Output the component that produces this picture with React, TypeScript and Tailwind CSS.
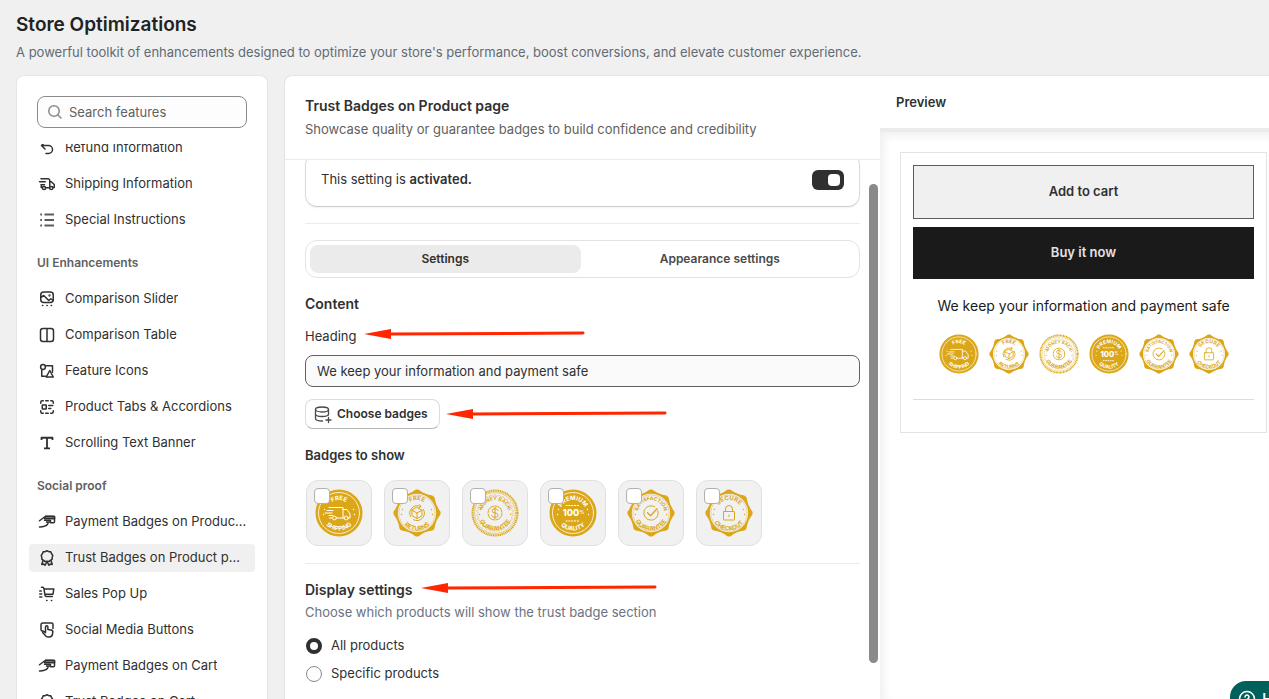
import { useState } from "react";
import type { ReactNode } from "react";

const GOLD = "#dba617";

const ICONS: Record<string, ReactNode> = {
  refund: <path d="M8 4 4.5 7.5 8 11M5 7.5h6.5a4 4 0 0 1 0 8H9" />,
  truck: (
    <>
      <path d="M4 4.75h7a1.75 1.75 0 0 1 1.75 1.75v5.75M12.75 7.75h1.5l3 2.75v3h-1.1M2.5 7.75h5.75M4 10.75h3.5M4.25 10.75v2.75h1M9 13.75h3" />
      <circle cx="7" cy="14" r="1.6" />
      <circle cx="14.25" cy="14" r="1.6" />
    </>
  ),
  list: (
    <g stroke="#5c5c5c" strokeWidth="1.8" strokeLinecap="butt">
      <path d="M7.5 4.5h9.500M7.5 10h9.500M7.5 15.500h9.500" />
      <path d="M3.25 4.500h1.750M3.25 10h1.750M3.25 15.500h1.750" />
    </g>
  ),
  slider: (
    <>
      <rect x="3.75" y="3" width="12.5" height="10.5" rx="3" />
      <path d="M4 8.25 6.75 6.5l5 5 2-1.75 2.25 1.5" />
      <circle cx="12.5" cy="6.5" r="0.4" />
      <path d="M5.5 16.5h.3M9.9 16.5h.3M14.2 16.5h.3" />
    </>
  ),
  columns: <path d="M6 3.5h8a2.5 2.5 0 0 1 2.5 2.5v8a2.5 2.5 0 0 1-2.5 2.5H6A2.5 2.5 0 0 1 3.5 14V6A2.5 2.5 0 0 1 6 3.5ZM10 3.5v13" />,
  shapes: (
    <>
      <circle cx="6" cy="6" r="2.4" />
      <path d="M9.5 4.75h6v6.5M4.75 9v6.25h4M12.75 9.5l3.5 6.5h-7Z" />
    </>
  ),
  tabs: (
    <>
      <path d="M3.75 6.25v-1a1.5 1.5 0 0 1 1.5-1.5h1M8.75 3.75h2.5M13.75 3.75h1a1.5 1.5 0 0 1 1.5 1.5v1M3.75 13.75v1a1.5 1.5 0 0 0 1.5 1.5h1M8.75 16.25h2.5M13.75 16.25h1a1.5 1.5 0 0 0 1.5-1.5v-1" />
      <rect x="5.25" y="8" width="4" height="4" rx="0.5" />
      <path d="M11.75 8.5h4M11.75 11.5h2" />
    </>
  ),
  text: <path strokeWidth="1.8" strokeLinecap="butt" d="M4.5 7V4.75h11V7M10 4.75v10.5M7 15.4h6" />,
  payment: (
    <>
      <path d="M8.5 4.25h8a1 1 0 0 1 1 1v4.5a1 1 0 0 1-1 1h-3" />
      <path fill="#8a8a8a" d="M8.5 4.5h9v2.25h-10Z" />
      <path d="M2.5 8.75 7.5 5M7.5 8.25h5.25c1.25 0 1 1.75 0 1.75H9.5c1.5 0 2 1.5 1 2.25C9 14.5 6.75 14.75 2.5 15" />
    </>
  ),
  rosette: (
    <>
      <path d="m10 2.75 1.8.9 2 .2.8 1.9 1.2 1.6-.6 2-.1 2-1.8 1-1.5 1.3-1.8-.5-1.8.5-1.5-1.3-1.8-1-.1-2-.6-2 1.2-1.6.8-1.9 2-.2Z" />
      <path d="m6 12.5-1.25 4 2-.4 1.25 1.2L9.75 14M14 12.5l1.25 4-2-.4-1.25 1.2L10.25 14" />
    </>
  ),
  cart: (
    <>
      <path d="M4.5 3.25h1.2c.7 0 1.1.5 1.2 1.1l1.1 7c.1.7.6 1.1 1.3 1.1h6M7.2 5h9.6l-.8 5.2H8" />
      <path d="M2.75 7h1.5M2.75 10h2M2.75 13h2M9.7 16.4h.3M14.4 16.4h.3" />
    </>
  ),
  touch: (
    <>
      <path d="M6 11h-.5A1.500 1.500 0 0 1 4 9.500V4.500A1.500 1.500 0 0 1 5.500 3h9A1.500 1.500 0 0 1 16 4.500v4" />
      <path d="M8.500 12V7a1.200 1.200 0 0 1 2.400 0v2.500l3.200.5c1.200.2 1.800 1 1.700 2.200l-.3 2c-.2 1.700-1.300 2.800-3 2.800h-1.500c-1.200 0-2-.5-2.600-1.400L5.750 12.700c-.5-1 .7-1.700 1.500-1l1.250 1" />
    </>
  ),
};

const GROUPS = [
  {
    title: "",
    items: [
      { icon: "refund", label: "Refund Information" },
      { icon: "truck", label: "Shipping Information" },
      { icon: "list", label: "Special Instructions" },
    ],
  },
  {
    title: "UI Enhancements",
    items: [
      { icon: "slider", label: "Comparison Slider" },
      { icon: "columns", label: "Comparison Table" },
      { icon: "shapes", label: "Feature Icons" },
      { icon: "tabs", label: "Product Tabs & Accordions" },
      { icon: "text", label: "Scrolling Text Banner" },
    ],
  },
  {
    title: "Social proof",
    items: [
      { icon: "payment", label: "Payment Badges on Product page" },
      { icon: "rosette", label: "Trust Badges on Product page", active: true },
      { icon: "cart", label: "Sales Pop Up" },
      { icon: "touch", label: "Social Media Buttons" },
      { icon: "payment", label: "Payment Badges on Cart" },
      { icon: "rosette", label: "Trust Badges on Cart" },
    ],
  },
];

const BADGES = [
  { id: "shipping", top: "FREE", bottom: "SHIPPING", shape: "solid" },
  { id: "returns", top: "FREE", bottom: "RETURNS", shape: "scallop" },
  { id: "money", top: "MONEY BACK", bottom: "GUARANTEE", shape: "rope" },
  { id: "premium", top: "PREMIUM", bottom: "QUALITY", shape: "solid" },
  { id: "satisfaction", top: "SATISFACTION", bottom: "GUARANTEE", shape: "scallop" },
  { id: "checkout", top: "SECURE", bottom: "CHECKOUT", shape: "scallop" },
];

type Badge = (typeof BADGES)[number];

// point at radius r and angle a (radians, clockwise from the top) around (24, 24)
function polar(r: number, a: number) {
  return `${(24 + r * Math.sin(a)).toFixed(2)} ${(24 - r * Math.cos(a)).toFixed(2)}`;
}

function wave(radius: number, depth: number, count: number) {
  const points: string[] = [];
  for (let i = 0; i < 240; i++) {
    const a = (i / 240) * Math.PI * 2;
    points.push(polar(radius + depth * Math.cos(count * a), a));
  }
  return `M${points.join("L")}Z`;
}

// eight soft points joined by slightly hollow sides
function octagon() {
  const step = Math.PI / 4;
  let d = `M${polar(23.3, -0.07)}`;
  for (let i = 0; i < 8; i++) {
    const a = i * step;
    d += `Q${polar(24, a)} ${polar(23.3, a + 0.07)}Q${polar(20, a + step / 2)} ${polar(23.3, a + step - 0.07)}`;
  }
  return `${d}Z`;
}

const SCALLOP = `${octagon()}M24 4.8a19.2 19.2 0 1 0 0 38.4a19.2 19.2 0 1 0 0-38.4Z`;
const INNER_WAVE = wave(17.6, 0.7, 26);

const BADGE_ART: Record<string, ReactNode> = {
  shipping: (
    <>
      <path d="M14 18.5h14v10.5h-6.5M12 21.5h6M10 24h7M14 26.5h4M28 20.5h4l3 4.5v4h-2M28 29h1.5M14.5 29h2.5" />
      <circle cx="19.5" cy="29" r="1.9" />
      <circle cx="31.2" cy="29" r="1.9" />
    </>
  ),
  returns: (
    <>
      <path d="m24 18.5 5 2.7v5.6l-5 2.7-5-2.7v-5.6Zm-5 2.7 5 2.8 5-2.8M24 24v5.5" />
      <path d="M17.5 27.5a7.500 7.500 0 0 1 10-10M30.500 20.500a7.500 7.500 0 0 1-10 10.200M26.500 15.700l1.500 1.800-2 1.200" />
    </>
  ),
  money: (
    <>
      <circle cx="24" cy="24" r="7" strokeDasharray="9.5 1.5" />
      <path d="M27 21.5c-.6-1.300-1.700-1.800-3-1.800-1.700 0-2.900.8-2.900 2.100 0 3 6 1.300 6 4.300 0 1.400-1.300 2.200-3.100 2.200-1.600 0-2.700-.7-3.200-1.900M24 18v12" />
    </>
  ),
  premium: (
    <>
      <path d="M17 16.500h14M17 32h14" strokeDasharray="1.200 1.600" />
      <text x="22" y="27.2" fontSize="9" fontWeight="800" textAnchor="middle" fill="currentColor" stroke="none">100</text>
      <text x="33" y="24.8" fontSize="5" fontWeight="600" textAnchor="middle" fill="currentColor" stroke="none">%</text>
    </>
  ),
  satisfaction: (
    <>
      <path d="M30.8 21.5a7.200 7.200 0 1 1-3-3.700" />
      <path d="m20.5 23.8 3 3 6.5-7" strokeWidth="1.3" />
    </>
  ),
  checkout: (
    <>
      <rect x="18.5" y="22.5" width="11" height="8.5" rx="0.5" />
      <path d="M20.500 22.500V20a3.500 3.500 0 0 1 7 0v2.500M24 26v1.500" />
    </>
  ),
};

function BadgeArt({ badge, scope, className }: { badge: Badge; scope: string; className: string }) {
  const solid = badge.shape === "solid";
  const id = `${scope}-${badge.id}`;
  return (
    <svg
      viewBox="0 0 48 48"
      className={className}
      fill="none"
      strokeLinecap="round"
      strokeLinejoin="round"
      style={{ color: solid ? "#fff" : GOLD }}
      aria-hidden="true"
    >
      <defs>
        <path id={`${id}-top`} d="M11 24a13 13 0 0 1 26 0" />
        <path id={`${id}-bottom`} d="M6.500 24a17.500 17.500 0 0 0 35 0" />
      </defs>
      {solid && (
        <>
          <circle cx="24" cy="24" r="23.5" fill={GOLD} />
          <circle cx="24" cy="24" r="20.5" stroke="#fff" strokeWidth="0.8" />
        </>
      )}
      {badge.shape === "scallop" && (
        <>
          <path d={SCALLOP} fill={GOLD} fillRule="evenodd" />
          <circle cx="24" cy="24" r="18" stroke={GOLD} strokeWidth="0.4" strokeDasharray="1.5 0.8" />
        </>
      )}
      {badge.shape === "rope" && (
        <>
          <circle cx="24" cy="24" r="22.4" stroke={GOLD} strokeWidth="2.2" strokeLinecap="butt" strokeDasharray="1.2 0.6" />
          <circle cx="24" cy="24" r="20.4" stroke={GOLD} strokeWidth="0.5" />
          <path d={INNER_WAVE} stroke={GOLD} strokeWidth="0.5" />
        </>
      )}
      <g stroke="currentColor" strokeWidth="1">{BADGE_ART[badge.id]}</g>
      <g fill="currentColor">
        <circle cx="9.5" cy="20.5" r="0.7" />
        <circle cx="8.5" cy="25.5" r="0.7" />
        <circle cx="38.5" cy="20.5" r="0.7" />
        <circle cx="39.5" cy="25.5" r="0.7" />
      </g>
      <g fill="currentColor" fontWeight="700" textAnchor="middle">
        <text fontSize={badge.top.length > 9 ? 5 : 6}>
          <textPath href={`#${id}-top`} startOffset="50%">{badge.top}</textPath>
        </text>
        <text fontSize="6">
          <textPath href={`#${id}-bottom`} startOffset="50%">{badge.bottom}</textPath>
        </text>
      </g>
    </svg>
  );
}

function Icon({ name }: { name: string }) {
  return (
    <svg
      viewBox="0 0 20 20"
      className="size-5 shrink-0"
      fill="none"
      stroke="#303030"
      strokeWidth="1.5"
      strokeLinecap="round"
      strokeLinejoin="round"
      aria-hidden="true"
    >
      {ICONS[name]}
    </svg>
  );
}

function Arrow({ length = 221 }: { length?: number }) {
  return (
    <svg width={length} height="16" className="shrink-0" aria-hidden="true">
      <path d="M0 8 27 3v10Z" fill="#ff2600" />
      <path d={`M26 8 ${length - 2} 7`} stroke="#ff2600" strokeWidth="3" strokeLinecap="round" />
    </svg>
  );
}

function Sidebar() {
  return (
    <aside className="flex w-[252px] shrink-0 flex-col rounded-t-lg border border-b-0 border-[#e6e6e6] bg-white pt-5">
      <div className="px-5">
        <label className="flex h-8 items-center gap-1 rounded-lg border border-[#8a8a8a] bg-[#fdfdfd] px-[7px]">
          <svg viewBox="0 0 20 20" className="size-5 shrink-0" fill="none" stroke="#8a8a8a" strokeWidth="1.5" strokeLinecap="round" aria-hidden="true">
            <circle cx="9" cy="9" r="5.25" />
            <path d="m13 13 3 3" />
          </svg>
          <span className="sr-only">Search features</span>
          <input
            type="search"
            placeholder="Search features"
            className="h-7 min-w-0 flex-1 bg-transparent text-[13px] text-[#303030] outline-none placeholder:text-[#616161]"
          />
        </label>
      </div>
      <nav className="mt-4 min-h-0 flex-1 overflow-hidden px-3">
        <div className="-mt-[10px]">
          {GROUPS.map((g) => (
            <section key={g.title}>
              {g.title && <h2 className="mt-[19px] mb-3 px-2 text-xs leading-5 font-semibold text-[#616161]">{g.title}</h2>}
              <ul className="flex flex-col gap-2">
                {g.items.map((item) => (
                  <li key={item.label}>
                    <a
                      href="#"
                      className={
                        item.active
                          ? "flex h-7 items-center gap-2 rounded bg-[#f0f0f0] px-2"
                          : "flex h-7 items-center gap-2 rounded px-2"
                      }
                    >
                      <Icon name={item.icon} />
                      <span className="truncate">{item.label}</span>
                    </a>
                  </li>
                ))}
              </ul>
            </section>
          ))}
        </div>
      </nav>
    </aside>
  );
}

function SettingsPanel() {
  const [enabled, setEnabled] = useState(true);
  const [heading, setHeading] = useState("We keep your information and payment safe");
  const [scope, setScope] = useState("all");

  return (
    <section className="relative flex min-w-0 flex-1 flex-col">
      <header className="border-b border-[#ebebeb] px-5 pt-5 pb-[21px]">
        <h2 className="text-sm leading-5 font-semibold">Trust Badges on Product page</h2>
        <p className="mt-1 leading-[18px] text-[#616161]">Showcase quality or guarantee badges to build confidence and credibility</p>
      </header>

      <div className="min-h-0 flex-1 overflow-hidden px-5">
        <div className="-mt-[7px] flex h-[54px] items-center justify-between rounded-xl border border-[#dcdcdc] border-b-[#cccccc] px-[15px] shadow-xs">
          <p>
            This setting is <strong className="font-semibold">activated.</strong>
          </p>
          <button
            type="button"
            role="switch"
            aria-checked={enabled}
            aria-label="Toggle setting"
            onClick={() => setEnabled(!enabled)}
            className={
              enabled
                ? "flex h-5 w-8 items-center justify-end rounded-md bg-[#303030] p-1"
                : "flex h-5 w-8 items-center rounded-md bg-[#8a8a8a] p-1"
            }
          >
            <span className="size-3 rounded bg-white" />
          </button>
        </div>

        <hr className="mt-4 border-[#ebebeb]" />

        <div role="tablist" className="mt-4 flex h-[38px] gap-1 rounded-xl border border-[#e3e3e3] p-1 text-xs font-semibold">
          <button type="button" role="tab" aria-selected="true" className="flex-1 rounded-lg bg-[#ebebeb]">
            Settings
          </button>
          <button type="button" role="tab" aria-selected="false" className="flex-1 rounded-lg text-[#4a4a4a]">
            Appearance settings
          </button>
        </div>

        <h3 className="mt-4 text-sm leading-5 font-semibold">Content</h3>
        <div className="mt-3 flex items-start gap-2">
          <label htmlFor="heading" className="leading-5">Heading</label>
          <Arrow />
        </div>
        <input
          id="heading"
          value={heading}
          onChange={(e) => setHeading(e.target.value)}
          className="mt-[9px] block h-8 w-full rounded-lg border border-[#616161] bg-[#fafafa] px-[11px] outline-none"
        />
        <div className="mt-3 flex items-center gap-1.5">
          <button
            type="button"
            className="flex h-[30px] items-center gap-1 rounded-lg border border-[#dcdcdc] border-b-[#b5b5b5] pr-[11px] pl-[7px] text-xs font-semibold"
          >
            <svg viewBox="0 0 20 20" className="size-5" fill="none" stroke="#4a4a4a" strokeWidth="1.3" strokeLinecap="round" aria-hidden="true">
              <ellipse cx="9" cy="5.500" rx="6.500" ry="2.500" />
              <path d="M2.500 5.500v9c0 1.500 2.500 2.500 7 2.500M2.500 10c0 1.400 3 2.500 6.500 2.500s6.500-1.100 6.500-2.500M15.500 5.500V11M15.500 13.500v5M13 16h5" />
            </svg>
            Choose badges
          </button>
          <Arrow />
        </div>

        <h3 className="mt-4 leading-5 font-semibold">Badges to show</h3>
        <div className="mt-[15px] flex gap-3 pl-px">
          {BADGES.map((b) => (
            <label
              key={b.id}
              className="relative flex size-[66px] items-center justify-center rounded-xl border border-[#e0e0e0] bg-[#f1f1f1]"
            >
              <BadgeArt badge={b} scope="tile" className="size-12" />
              <input
                type="checkbox"
                aria-label={`${b.top} ${b.bottom}`}
                className="absolute top-[7px] left-[7px] size-4 appearance-none rounded border border-[#b0b0b0] bg-white checked:bg-[#303030]"
              />
            </label>
          ))}
        </div>

        <hr className="mt-[17px] border-[#ebebeb]" />

        <div className="mt-4 flex items-start gap-2">
          <h3 className="text-sm leading-5 font-semibold">Display settings</h3>
          <Arrow length={236} />
        </div>
        <p className="mt-0.5 leading-5 text-[#6b7280]">Choose which products will show the trust badge section</p>
        <fieldset className="mt-[10px] flex flex-col">
          {[
            { value: "all", label: "All products" },
            { value: "specific", label: "Specific products" },
          ].map((o) => (
            <label key={o.value} className="flex h-7 items-center gap-[9px] pl-px">
              <input
                type="radio"
                name="scope"
                checked={scope === o.value}
                onChange={() => setScope(o.value)}
                className="size-4 appearance-none rounded-full border border-[#8a8a8a] bg-[#fdfdfd] checked:border-4 checked:border-[#303030]"
              />
              {o.label}
            </label>
          ))}
        </fieldset>
      </div>

      {/* scrollbar thumb */}
      <div className="absolute top-[108px] right-0.5 bottom-9 w-[9px] rounded-full bg-[#8a8a8a]" />
    </section>
  );
}

function Preview() {
  return (
    <section className="flex w-[389px] shrink-0 flex-col">
      <h2 className="px-4 py-4 leading-5 font-semibold">Preview</h2>
      <div className="flex-1 border-t-4 border-[#ebebeb] pt-5 pr-0.5 pl-5 shadow-[inset_4px_4px_8px_#f0f0f0]">
        <div className="border border-[#e3e3e3] bg-white px-3 pt-3 pb-8">
          <button type="button" className="h-[54px] w-full border border-[#5c5c5c] bg-[#f0f0f0] font-semibold">
            Add to cart
          </button>
          <button type="button" className="mt-2 h-[52px] w-full bg-[#1a1a1a] font-semibold text-[#e3e3e3]">
            Buy it now
          </button>
          <p className="mt-4 text-center text-sm leading-[22px] text-[#1a1a1a]">We keep your information and payment safe</p>
          <div className="mt-[17px] flex justify-center gap-2.5">
            {BADGES.map((b) => (
              <BadgeArt key={b.id} badge={b} scope="preview" className="size-10" />
            ))}
          </div>
          <hr className="mt-[25px] border-[#dcdcdc]" />
        </div>
      </div>
    </section>
  );
}

export default function App() {
  return (
    <div className="flex h-screen flex-col overflow-hidden bg-[#f0f0f0] font-[Inter,sans-serif] text-[13px] text-[#303030]">
      <header className="px-4 pt-3 pb-[13px]">
        <h1 className="text-[19px] leading-[26px] font-semibold text-[#202223]">Store Optimizations</h1>
        <p className="mt-1 leading-5 text-[#616b75]">
          A powerful toolkit of enhancements designed to optimize your store's performance, boost conversions, and elevate customer experience.
        </p>
      </header>
      <main className="flex min-h-0 flex-1 gap-4 pl-4">
        <Sidebar />
        <div className="flex min-w-0 flex-1 rounded-tl-lg border-t border-l border-[#e3e3e3] bg-white">
          <SettingsPanel />
          <Preview />
        </div>
      </main>
      <button
        type="button"
        className="fixed -right-14 -bottom-[18px] flex h-9 w-[95px] items-center gap-1.5 rounded-2xl bg-[#00605b] px-2 text-base font-medium text-white"
      >
        <svg viewBox="0 0 18 18" className="size-[18px]" fill="none" stroke="currentColor" strokeWidth="1.5" strokeLinecap="round" aria-hidden="true">
          <circle cx="9" cy="9" r="7.5" />
          <path d="M7 7a2 2 0 1 1 3 1.700c-.7.4-1 .7-1 1.500M9 12.500v.1" />
        </svg>
        Help
      </button>
    </div>
  );
}
